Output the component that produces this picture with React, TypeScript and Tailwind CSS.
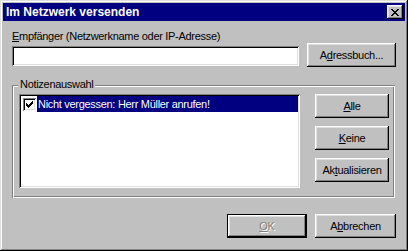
import React from 'react';

const raised =
  'bg-[#c0c0c0] shadow-[inset_-1px_-1px_#000,inset_1px_1px_#fff,inset_-2px_-2px_#808080,inset_2px_2px_#dfdfdf]';
const sunken =
  'bg-white shadow-[inset_1px_1px_#808080,inset_-1px_-1px_#fff,inset_2px_2px_#000,inset_-2px_-2px_#dfdfdf]';

const CloseGlyph: React.FC = () => {
  const rows = ['11000011', '01100110', '00111100', '00011000', '00111100', '01100110', '11000011'];
  return (
    <svg width="8" height="7" viewBox="0 0 8 7" shapeRendering="crispEdges">
      {rows.map((r, y) =>
        r.split('').map((c, x) => (c === '1' ? <rect key={`${x}-${y}`} x={x} y={y} width="1" height="1" fill="#000" /> : null))
      )}
    </svg>
  );
};

const CheckGlyph: React.FC = () => {
  const rows = ['0000001', '0000011', '1000111', '1101110', '1111100', '0111000', '0010000'];
  return (
    <svg width="7" height="7" viewBox="0 0 7 7" shapeRendering="crispEdges">
      {rows.map((r, y) =>
        r.split('').map((c, x) => (c === '1' ? <rect key={`${x}-${y}`} x={x} y={y} width="1" height="1" fill="#000" /> : null))
      )}
    </svg>
  );
};

const Btn: React.FC<{ className?: string; children: React.ReactNode }> = ({ className = '', children }) => (
  <button className={`${raised} h-[24px] flex items-center justify-center leading-[13px] ${className}`}>{children}</button>
);

const App: React.FC = () => {
  return (
    <div className="w-[408px] h-[251px] bg-[#c0c0c0] p-[3px] font-['Liberation_Sans',Arial,sans-serif] text-[11px] text-black shadow-[inset_-1px_-1px_#000,inset_1px_1px_#dfdfdf,inset_-2px_-2px_#808080,inset_2px_2px_#fff]">
      {/* Title bar */}
      <div className="h-[18px] bg-[#000080] flex items-center pl-[3px] pr-[2px]">
        <span className="text-white font-bold text-[12px] leading-[14px]">Im Netzwerk versenden</span>
        <button className={`${raised} ml-auto w-[16px] h-[14px] flex items-center justify-center`}>
          <CloseGlyph />
        </button>
      </div>

      <div className="pl-[9px] pr-[9px] tracking-[-0.3px]">
        <div className="mt-[9px] h-[13px] leading-[13px]">
          <u>E</u>mpfänger (Netzwerkname oder IP-Adresse)
        </div>

        <div className="flex">
          <div className={`${sunken} w-[287px] h-[20px] mt-[3px]`} />
          <Btn className="ml-auto w-[89px]">
            A<u>d</u>ressbuch...
          </Btn>
        </div>

        {/* Group box */}
        <div className="relative mt-[18px] w-[383px] h-[113px] shadow-[inset_1px_1px_#808080,inset_-1px_-1px_#fff,inset_2px_2px_#fff,inset_-2px_-2px_#808080] pt-[9px] pl-[7px] flex">
          <span className="absolute left-[6px] top-[-7px] px-[2px] bg-[#c0c0c0] leading-[13px]">Notizenauswahl</span>
          <div className={`${sunken} w-[281px] h-[94px] p-[2px]`}>
            <div className="flex items-center h-[16px]">
              <div className="w-[13px] h-[13px] ml-[2px] mr-[1px] bg-white shadow-[inset_1px_1px_#808080,inset_-1px_-1px_#fff,inset_2px_2px_#000,inset_-2px_-2px_#dfdfdf] flex items-center justify-center">
                <CheckGlyph />
              </div>
              <div className="flex-1 h-[16px] bg-[#000080] text-white leading-[16px] pl-[1px]">
                Nicht vergessen: Herr Müller anrufen!
              </div>
            </div>
          </div>
          <div className="ml-[15px] flex flex-col gap-[8px]">
            <Btn className="w-[74px]">
              <u>A</u>lle
            </Btn>
            <Btn className="w-[74px]">
              <u>K</u>eine
            </Btn>
            <Btn className="w-[74px]">
              Ak<u>t</u>ualisieren
            </Btn>
          </div>
        </div>

        <div className="flex justify-end gap-[8px] mt-[16px]">
          <button className="w-[80px] h-[24px] bg-[#c0c0c0] shadow-[inset_0_0_0_1px_#000,inset_-2px_-2px_#000,inset_2px_2px_#fff,inset_-3px_-3px_#808080,inset_3px_3px_#dfdfdf] flex items-center justify-center text-[#808080] [text-shadow:1px_1px_0_#fff]">
            <u>O</u>K
          </button>
          <Btn className="w-[81px]">
            A<u>b</u>brechen
          </Btn>
        </div>
      </div>
    </div>
  );
};

export default App;
